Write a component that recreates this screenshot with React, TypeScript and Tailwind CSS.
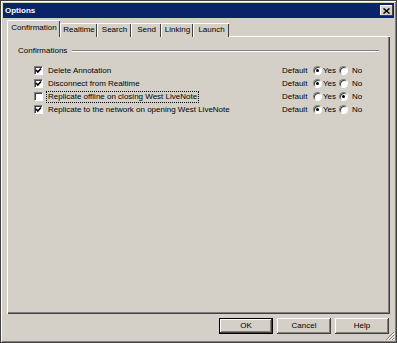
import React from "react";

const tabs = [
  { label: "Confirmation", w: "w-[53px]", active: true },
  { label: "Realtime", w: "w-[37px]" },
  { label: "Search", w: "w-[34px]" },
  { label: "Send", w: "w-[30px]" },
  { label: "Linking", w: "w-[32px]" },
  { label: "Launch", w: "w-[36px]" },
];

const rows = [
  { label: "Delete Annotation", checked: true, yes: true },
  { label: "Disconnect from Realtime", checked: true, yes: true },
  { label: "Replicate offline on closing West LiveNote", checked: false, yes: false, focus: true },
  { label: "Replicate to the network on opening West LiveNote", checked: true, yes: true },
];

function CheckBox({ checked }: { checked: boolean }) {
  return (
    <div className="w-[9px] h-[9px] bg-white border-t border-l border-t-[#808080] border-l-[#808080] border-b border-r border-b-white border-r-white shadow-[inset_1px_1px_0_#404040] flex items-center justify-center">
      {checked && (
        <svg width="7" height="7" viewBox="0 0 7 7">
          <polyline points="1,3 2.8,5 6,1.5" fill="none" stroke="#000" strokeWidth="1.6" />
        </svg>
      )}
    </div>
  );
}

function Radio({ on }: { on: boolean }) {
  return (
    <div className="w-[9px] h-[9px] rounded-full bg-white border border-t-[#808080] border-l-[#808080] border-b-white border-r-white shadow-[inset_1px_1px_0_#404040] flex items-center justify-center">
      {on && <div className="w-[3px] h-[3px] rounded-full bg-black" />}
    </div>
  );
}

function Button({ label, isDefault }: { label: string; isDefault?: boolean }) {
  return (
    <div className={`w-[54px] h-[16px] ${isDefault ? "border border-black" : ""}`}>
      <div className="w-full h-full bg-[#d4d0c8] shadow-[inset_-1px_-1px_0_#404040,inset_1px_1px_0_#ffffff,inset_-2px_-2px_0_#808080] flex items-center justify-center">
        {label}
      </div>
    </div>
  );
}

export default function App() {
  return (
    <div className="relative w-[397px] h-[343px] bg-[#d4d0c8] shadow-[inset_0_0_0_1px_#404040,inset_2px_2px_0_#ffffff,inset_-2px_-2px_0_#808080] p-[3px] flex flex-col font-['Liberation_Sans',Arial,sans-serif] text-[8px] leading-none text-black">
      {/* title bar */}
      <div className="h-[15px] bg-[#0a246a] flex items-center justify-between pl-[2px] pr-[1px]">
        <span className="text-white font-bold">Options</span>
        <div className="w-[13px] h-[11px] bg-[#d4d0c8] shadow-[inset_-1px_-1px_0_#404040,inset_1px_1px_0_#ffffff] flex items-center justify-center">
          <svg width="7" height="6" viewBox="0 0 7 6">
            <path d="M0.5 0.5 L6.5 5.5 M6.5 0.5 L0.5 5.5" stroke="#000" strokeWidth="1.5" />
          </svg>
        </div>
      </div>

      {/* tabs */}
      <div className="mt-[2px] pl-[4px] h-[17px] flex items-end relative z-10">
        {tabs.map((t) => (
          <div
            key={t.label}
            className={`${t.w} ${t.active ? "h-[17px] pb-[3px]" : "h-[14px] pb-[1px]"} bg-[#d4d0c8] border-t border-l border-t-white border-l-white shadow-[inset_-1px_0_0_#404040] rounded-tl-[2px] flex items-center justify-center`}
          >
            {t.label}
          </div>
        ))}
      </div>

      {/* panel */}
      <div className="-mt-[1px] ml-[4px] mr-[4px] h-[278px] border-t border-l border-t-white border-l-white shadow-[inset_-1px_-1px_0_#404040,inset_-2px_-2px_0_#808080] flex flex-col pt-[8px]">
        <div className="h-[12px] flex items-center pl-[10px] pr-[11px]">
          <span>Confirmations</span>
          <div className="flex-1 ml-[5px] h-[2px] border-t border-t-[#808080] border-b border-b-white" />
        </div>
        <div className="mt-[7px] flex flex-col">
          {rows.map((r) => (
            <div key={r.label} className="h-[13px] flex items-center">
              <div className="w-[274px] flex items-center pl-[26px]">
                <CheckBox checked={r.checked} />
                <span className={`ml-[3px] px-[1px] py-[1px] border ${r.focus ? "border-dotted border-black" : "border-transparent"}`}>
                  {r.label}
                </span>
              </div>
              <div className="flex items-center">
                <span className="w-[31px]">Default</span>
                <Radio on={r.yes} />
                <span className="ml-[1px] w-[16px]">Yes</span>
                <Radio on={!r.yes} />
                <span className="ml-[4px]">No</span>
              </div>
            </div>
          ))}
        </div>
      </div>

      {/* buttons */}
      <div className="mt-[4px] flex justify-end gap-[4px] pr-[5px]">
        <Button label="OK" isDefault />
        <Button label="Cancel" />
        <Button label="Help" />
      </div>

      <svg className="absolute right-[2px] bottom-[2px]" width="10" height="10" viewBox="0 0 10 10">
        <path d="M9 1 L1 9 M9 4 L4 9 M9 7 L7 9" stroke="#808080" strokeWidth="1" />
        <path d="M9.5 2 L2 9.5 M9.5 5 L5 9.5 M9.5 8 L8 9.5" stroke="#ffffff" strokeWidth="1" />
      </svg>
    </div>
  );
}
